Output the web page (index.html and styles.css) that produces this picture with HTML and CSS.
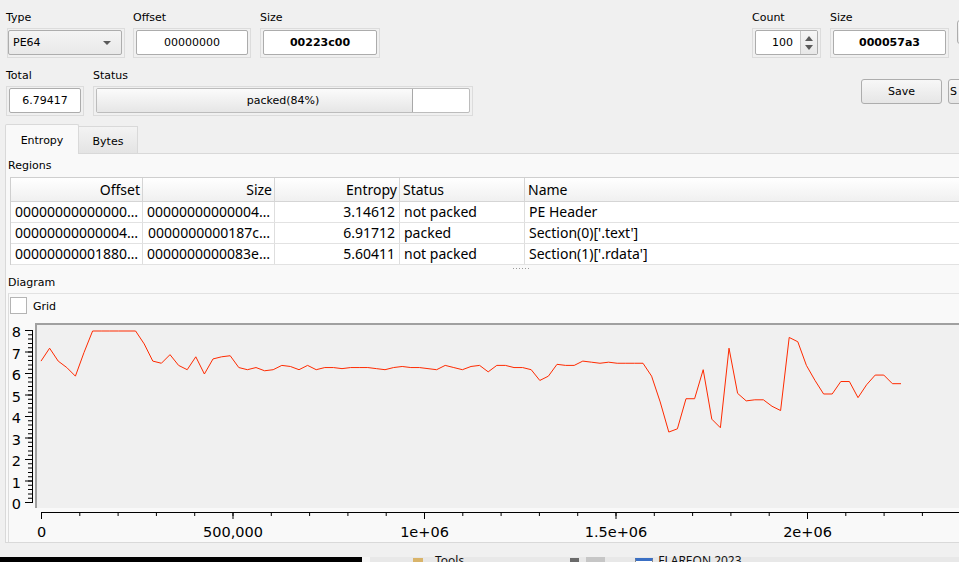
FILE: index.html
```html
<!DOCTYPE html>
<html>
<head>
<meta charset="utf-8">
<title>Entropy</title>
<link rel="stylesheet" href="styles.css">
</head>
<body>
<div class="row row1">
  <div class="group">
    <div class="lbl">Type</div>
    <div class="frame w-type"><div class="combo"><span>PE64</span><span class="caret"></span></div></div>
  </div>
  <div class="group g-offset">
    <div class="lbl">Offset</div>
    <div class="frame w-offset"><div class="edit">00000000</div></div>
  </div>
  <div class="group g-size">
    <div class="lbl">Size</div>
    <div class="frame w-size"><div class="edit bold">00223c00</div></div>
  </div>
  <div class="group g-count">
    <div class="lbl">Count</div>
    <div class="frame w-count"><div class="spin"><span class="spin-val">100</span><span class="spin-btns"><i class="up"></i><i class="down"></i></span></div></div>
  </div>
  <div class="group g-size2">
    <div class="lbl">Size</div>
    <div class="frame w-size2"><div class="edit bold">000057a3</div></div>
  </div>
  <div class="btn btn-cut"></div>
</div>
<div class="row row2">
  <div class="group">
    <div class="lbl">Total</div>
    <div class="frame w-total"><div class="edit">6.79417</div></div>
  </div>
  <div class="group g-status">
    <div class="lbl">Status</div>
    <div class="frame w-status"><div class="progress"><div class="chunk" style="width:85%"></div><span class="ptext">packed(84%)</span></div></div>
  </div>
  <button class="btn btn-save">Save</button>
  <button class="btn btn-s">S</button>
</div>
<div class="tabs">
  <div class="tab tab-active">Entropy</div>
  <div class="tab tab-bytes">Bytes</div>
</div>
<div class="pane">
  <div class="sec-lbl">Regions</div>
  <div class="table">
    <div class="tr thead">
      <div class="td r">Offset</div>
      <div class="td r">Size</div>
      <div class="td r">Entropy</div>
      <div class="td">Status</div>
      <div class="td">Name</div>
    </div>
    <div class="tr">
      <div class="td r">00000000000000…</div>
      <div class="td r">00000000000004…</div>
      <div class="td r">3.14612</div>
      <div class="td">not packed</div>
      <div class="td">PE Header</div>
    </div>
    <div class="tr">
      <div class="td r">00000000000004…</div>
      <div class="td r">0000000000187c…</div>
      <div class="td r">6.91712</div>
      <div class="td">packed</div>
      <div class="td">Section(0)['.text']</div>
    </div>
    <div class="tr">
      <div class="td r">00000000001880…</div>
      <div class="td r">0000000000083e…</div>
      <div class="td r">5.60411</div>
      <div class="td">not packed</div>
      <div class="td">Section(1)['.rdata']</div>
    </div>
  </div>
  <div class="splitter"><div class="dots"></div></div>
  <div class="sec-lbl2">Diagram</div>
  <div class="diag">
    <div class="gridrow"><span class="check"></span><span class="gridtxt">Grid</span></div>
    <svg class="chart" width="950" height="224" viewBox="9 318 950 224">
      <rect x="35" y="323" width="930" height="185" fill="#f0f0f0"/>
      <rect x="35" y="323" width="930" height="2" fill="#a0a0a0"/>
      <rect x="35" y="323" width="2" height="185" fill="#a0a0a0"/>
      <path d="M32.5 330 V503" stroke="#000" fill="none"/>
      <path d="M30.5 503 V330" stroke="#000" stroke-width="5" stroke-dasharray="1 3.3" fill="none"/>
      <path d="M29 503 V329" stroke="#000" stroke-width="8" stroke-dasharray="1 20.5" fill="none"/>
      <path d="M41 512.5 H960" stroke="#000" fill="none"/>
      <path d="M41 514 H960" stroke="#000" stroke-width="4" stroke-dasharray="1 37.3" fill="none"/>
      <path d="M41 515.5 H960" stroke="#000" stroke-width="7" stroke-dasharray="1 190.5" fill="none"/>
      <g class="ylab" text-anchor="end">
        <text x="21" y="337">8</text>
        <text x="21" y="358.5">7</text>
        <text x="21" y="380">6</text>
        <text x="21" y="401.5">5</text>
        <text x="21" y="423">4</text>
        <text x="21" y="444.5">3</text>
        <text x="21" y="466">2</text>
        <text x="21" y="487.5">1</text>
        <text x="21" y="509">0</text>
      </g>
      <g class="xlab" text-anchor="middle">
        <text x="41.5" y="537">0</text>
        <text x="233" y="537">500,000</text>
        <text x="424.5" y="537">1e+06</text>
        <text x="616" y="537">1.5e+06</text>
        <text x="807.5" y="537">2e+06</text>
      </g>
      <g transform="translate(41 503) scale(8.6 -21.5)">
        <polyline fill="none" stroke="#ff2a00" stroke-width="1" vector-effect="non-scaling-stroke" points="0,6.6 1,7.2 2,6.6 3,6.3 4,5.9 5,7.0 6,8 7,8 8,8 9,8 10,8 11,8 12,7.4 13,6.6 14,6.5 15,6.9 16,6.4 17,6.2 18,6.8 19,6.0 20,6.7 21,6.8 22,6.85 23,6.3 24,6.2 25,6.3 26,6.15 27,6.2 28,6.4 29,6.35 30,6.2 31,6.4 32,6.2 33,6.3 34,6.3 35,6.25 36,6.3 37,6.3 38,6.3 39,6.25 40,6.2 41,6.3 42,6.35 43,6.3 44,6.3 45,6.25 46,6.2 47,6.4 48,6.3 49,6.2 50,6.35 51,6.4 52,6.1 53,6.4 54,6.4 55,6.3 56,6.3 57,6.2 58,5.7 59,5.9 60,6.45 61,6.4 62,6.4 63,6.6 64,6.55 65,6.5 66,6.55 67,6.5 68,6.5 69,6.5 70,6.5 71,5.9 72,4.7 73,3.3 74,3.45 75,4.85 76,4.85 77,6.2 78,3.9 79,3.5 80,7.2 81,5.1 82,4.75 83,4.8 84,4.8 85,4.5 86,4.3 87,7.7 88,7.5 89,6.4 90,5.7 91,5.07 92,5.07 93,5.65 94,5.65 95,4.9 96,5.5 97,5.95 98,5.95 99,5.55 100,5.55"/>
      </g>
    </svg>
  </div>
</div>
<div class="taskgap"></div>
<div class="taskbar">
  <div class="tb-black"></div>
  <div class="tb-white"></div>
  <div class="tb-folder"></div>
  <div class="tb-text tb-tools">Tools</div>
  <div class="tb-pin"></div>
  <div class="tb-block"></div>
  <div class="tb-win"></div>
  <div class="tb-text tb-flare">FLAREON 2023</div>
</div>
</body>
</html>
```
FILE: styles.css
```css
* { box-sizing: border-box; }
html, body { margin: 0; padding: 0; }
body {
  width: 959px;
  height: 562px;
  overflow: hidden;
  background: #f0f0f0;
  font-family: "DejaVu Sans", sans-serif;
  font-size: 11px;
  color: #000;
}
.row {
  display: flex;
  align-items: flex-start;
  white-space: nowrap;
  height: 58px;
  padding: 10px 0 0 6px;
}
.group { display: flex; flex-direction: column; flex: none; }
.lbl { height: 14px; line-height: 15px; margin-bottom: 4px; }
.frame {
  height: 30px;
  border: 1px solid #dcdcdc;
  padding: 1px 2px 2px 2px;
}
.edit {
  height: 25px;
  line-height: 23px;
  background: #fff;
  border: 1px solid #acacac;
  border-radius: 2px;
  text-align: center;
}
.bold { font-weight: bold; }
.w-type { width: 118px; margin-left: 1px; padding-left: 0; }
.g-offset { margin-left: 8px; }
.w-offset { width: 118px; }
.g-size { margin-left: 9px; }
.w-size { width: 120px; }
.g-count { margin-left: 372px; }
.w-count { width: 69px; }
.g-size2 { margin-left: 9px; }
.w-size2 { width: 119px; }
.combo {
  height: 25px;
  border: 1px solid #adadad;
  border-radius: 2px;
  background: linear-gradient(#f4f4f4, #e9e9e9);
  display: flex;
  align-items: center;
  justify-content: space-between;
  padding: 0 10px 0 4px;
}
.caret {
  width: 0; height: 0;
  border-left: 4px solid transparent;
  border-right: 4px solid transparent;
  border-top: 4px solid #5a5a5a;
}
.spin {
  height: 25px;
  display: flex;
  background: #fff;
  border: 1px solid #acacac;
  border-radius: 2px;
  overflow: hidden;
}
.spin-val { flex: 1; text-align: right; padding-right: 7px; line-height: 23px; }
.spin-btns {
  width: 17px;
  border-left: 1px solid #c8c8c8;
  background: linear-gradient(#f6f6f6, #e8e8e8);
  display: flex;
  flex-direction: column;
  align-items: center;
  justify-content: center;
  gap: 4px;
}
.up, .down {
  display: block;
  width: 0; height: 0;
  border-left: 4.5px solid transparent;
  border-right: 4.5px solid transparent;
}
.up { border-bottom: 5px solid #5b5b5b; }
.down { border-top: 5px solid #5b5b5b; }
.btn {
  flex: none;
  height: 25px;
  border: 1px solid #adadad;
  border-radius: 3px;
  background: linear-gradient(#f7f7f7, #e6e6e6);
  font: inherit;
  color: #000;
  padding: 0;
}
.btn-cut { margin: 10px 0 0 8px; width: 60px; height: 24px; }
.w-total { width: 78px; }
.g-status { margin-left: 9px; }
.w-status { width: 380px; }
.progress {
  display: grid;
  height: 25px;
  border: 1px solid #bcbcbc;
  border-radius: 2px;
  background: #fff;
  overflow: hidden;
}
.progress > * { grid-area: 1 / 1; }
.chunk {
  height: 100%;
  background: linear-gradient(#fbfbfb, #e6e6e6);
  border-right: 1px solid #a8a8a8;
}
.ptext { text-align: center; line-height: 23px; }
.btn-save { margin: 11px 0 0 388px; width: 81px; text-align: center; }
.btn-s { margin: 11px 0 0 6px; width: 80px; text-align: left; padding-left: 1px; }
.tabs {
  display: flex;
  align-items: flex-end;
  height: 29px;
  margin-top: 8px;
  padding-left: 5px;
}
.tab {
  border: 1px solid #d9d9d9;
  border-bottom: none;
  text-align: center;
  flex: none;
}
.tab-active {
  position: relative;
  z-index: 1;
  width: 74px;
  height: 30px;
  margin-bottom: -1px;
  line-height: 31px;
  background: #f9f9f9;
  border-radius: 2px 2px 0 0;
}
.tab-bytes {
  width: 60px;
  height: 27px;
  margin-left: -1px;
  line-height: 30px;
  background: linear-gradient(#f3f3f3, #e4e4e4);
}
.pane {
  width: 1000px;
  height: 390px;
  margin-left: 5px;
  border: 1px solid #d9d9d9;
  background: #f9f9f9;
}
.sec-lbl { height: 18px; padding: 4px 0 0 2px; line-height: 15px; }
.table {
  margin: 5px 0 0 4px;
  width: 990px;
  border-top: 1px solid #cfcfcf;
  border-left: 1px solid #cfcfcf;
  background: #fff;
  font-family: "Noto Sans", sans-serif;
  font-size: 14px;
}
.tr {
  display: grid;
  grid-template-columns: 132px 132px 125px 125px 1fr;
  height: 21px;
  border-bottom: 1px solid #e2e2e2;
}
.thead {
  height: 24px;
  background: linear-gradient(#ffffff, #f0f0f0);
  border-bottom: 1px solid #d5d5d5;
}
.td {
  border-right: 1px solid #dedede;
  padding: 0 4px;
  line-height: 20px;
  overflow: hidden;
  white-space: nowrap;
}
.thead .td { line-height: 23px; padding: 0 2px 0 3px; border-right-color: #d5d5d5; }
.r { text-align: right; }
.splitter { height: 10px; padding-top: 3px; }
.dots {
  margin-left: 507px;
  width: 16px;
  height: 1px;
  background: repeating-linear-gradient(to right, #9a9a9a 0 1px, transparent 1px 3px);
}
.sec-lbl2 { height: 14px; line-height: 15px; padding-left: 2px; margin-bottom: 4px; }
.diag {
  margin-left: 2px;
  height: 249px;
  border-top: 1px solid #e2e2e2;
  border-left: 1px solid #dcdcdc;
}
.gridrow { height: 24px; display: flex; align-items: center; padding-left: 1px; }
.check {
  width: 17px;
  height: 17px;
  border: 1px solid #b4b4b4;
  background: #fff;
  margin-top: -2px;
}
.gridtxt { margin-left: 6px; }
.chart { display: block; }
.chart text { font-family: "DejaVu Sans", sans-serif; fill: #000; }
.ylab text { font-size: 14.5px; }
.xlab text { font-size: 14.5px; }
.taskgap { height: 14px; }
.taskbar {
  display: flex;
  height: 20px;
  background: #e8e8e8;
  font-family: "Noto Sans", sans-serif;
  font-size: 12px;
  line-height: 8px;
}
.tb-black { width: 362px; background: #000; }
.tb-white { width: 8px; background: #f6f6f6; }
.tb-folder { width: 10px; margin-left: 43px; margin-top: 1px; background: #d9b46a; }
.tb-text { color: #111; white-space: nowrap; }
.tb-tools { margin-left: 12px; }
.tb-pin { width: 9px; height: 4px; margin: 1px 0 0 106px; background: #6a6a6a; }
.tb-block { width: 19px; margin-left: 7px; background: #c6c6c6; }
.tb-win { width: 18px; height: 10px; margin: 1px 0 0 30px; border: 1px solid #8a8a8a; border-top: 3px solid #3a6fc4; background: #fff; }
.tb-flare { margin-left: 5px; }
```
